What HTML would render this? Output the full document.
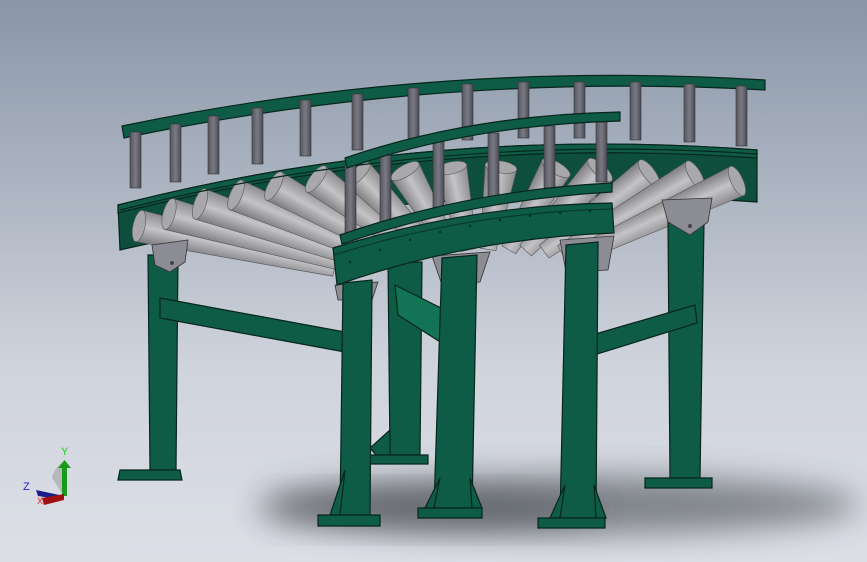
<!DOCTYPE html>
<html><head><style>
html,body{margin:0;padding:0;width:867px;height:562px;overflow:hidden}
body{background:linear-gradient(#8996a8 0%,#aeb6c3 35%,#cfd3dc 65%,#dcdfe6 100%)}
svg{position:absolute;left:0;top:0}
</style></head><body>
<svg width="867" height="562" viewBox="0 0 867 562">
<defs>
<filter id="b" x="-50%" y="-50%" width="200%" height="200%"><feGaussianBlur stdDeviation="16"/></filter>
<linearGradient id="v" x1="0" y1="0" x2="1" y2="0"><stop offset="0" stop-color="#55555f"/><stop offset="0.5" stop-color="#7a7a85"/><stop offset="1" stop-color="#4a4a55"/></linearGradient>
</defs>
<ellipse cx="560" cy="505" rx="300" ry="30" fill="#44484f" opacity="0.6" filter="url(#b)"/>
<ellipse cx="430" cy="510" rx="170" ry="18" fill="#3a3e45" opacity="0.45" filter="url(#b)"/>
<g stroke="#06251b" stroke-width="1.2" fill="#0f5c46">
<path d="M118 205 Q430 125 757 150 L757 202 Q430 178 120 250 Z" fill="#0d4f3c"/>
<path d="M118 205 Q430 125 757 150 L757 158 Q430 135 118 213 Z"/>
</g>
<g id="rollers"></g>
<g stroke="#06251b" stroke-width="1.2" fill="#0f5c46">
<path d="M122 126 Q440 60 765 80 L765 90 Q440 72 124 138 Z"/>
</g>
<g fill="url(#v)" stroke="#333" stroke-width="0.6">
<rect x="130" y="132" width="11" height="56"/><rect x="170" y="124" width="11" height="58"/>
<rect x="208" y="116" width="11" height="58"/><rect x="252" y="108" width="11" height="56"/>
<rect x="300" y="100" width="11" height="56"/><rect x="352" y="94" width="11" height="56"/>
<rect x="408" y="88" width="11" height="56"/><rect x="462" y="84" width="11" height="56"/>
<rect x="518" y="82" width="11" height="56"/><rect x="574" y="82" width="11" height="56"/>
<rect x="630" y="82" width="11" height="58"/><rect x="684" y="84" width="11" height="58"/>
<rect x="736" y="86" width="11" height="60"/>
</g>
<g stroke="#06251b" stroke-width="1.2" fill="#0f5c46">
<path d="M120 210 Q430 132 757 154" fill="none"/>
<path d="M148 255 L178 255 L176 470 L150 470 Z"/>
<path d="M120 470 L180 470 L182 480 L118 480 Z"/>
<path d="M160 298 L345 332 L345 352 L160 318 Z"/>
<path d="M388 262 L422 262 L420 455 L390 455 Z"/>
<path d="M376 455 L370 448 L390 430 L390 455 Z"/>
<path d="M365 455 L428 455 L428 464 L365 464 Z"/>
<path d="M395 285 L445 310 L445 345 L398 315 Z" fill="#137355"/>
<path d="M668 222 L704 222 L700 478 L670 478 Z"/>
<path d="M645 478 L712 478 L712 488 L645 488 Z"/>
<path d="M592 335 L695 305 L697 323 L594 355 Z"/>
</g>
<g fill="url(#v)" stroke="#333" stroke-width="0.6">
<rect x="345" y="165" width="11" height="72"/><rect x="380" y="155" width="11" height="68"/>
<rect x="433" y="142" width="11" height="66"/><rect x="488" y="133" width="11" height="64"/>
<rect x="544" y="126" width="11" height="62"/><rect x="596" y="122" width="11" height="60"/>
</g>
<g stroke="#06251b" stroke-width="1.2" fill="#0f5c46">
<path d="M345 158 Q470 115 620 112 L620 121 Q470 125 347 168 Z"/>
<path d="M340 235 Q470 190 612 183 L612 192 Q470 200 342 244 Z"/>
</g>
<g fill="#8c8c94" stroke="#333" stroke-width="0.8">
<path d="M152 245 L188 240 L185 262 L170 272 L155 265 Z"/>
<path d="M662 200 L712 198 L708 222 L690 235 L668 222 Z"/>
<path d="M432 256 L490 252 L480 282 L442 285 Z"/>
<path d="M560 240 L614 236 L608 270 L566 272 Z"/>
<path d="M335 285 L378 282 L372 300 L338 300 Z"/>
</g>
<g fill="#444"><circle cx="172" cy="263" r="2"/><circle cx="690" cy="226" r="2"/><circle cx="462" cy="268" r="1.5"/><circle cx="462" cy="278" r="1.5"/><circle cx="586" cy="254" r="1.5"/><circle cx="586" cy="265" r="1.5"/></g>
<g stroke="#06251b" stroke-width="1.2" fill="#0f5c46">
<path d="M343 283 L372 280 L370 515 L340 515 Z"/>
<path d="M340 515 L330 515 L345 470 Z"/>
<path d="M318 515 L380 515 L380 526 L318 526 Z"/>
<path d="M442 258 L477 255 L472 508 L434 508 Z"/>
<path d="M434 508 L425 508 L440 478 Z"/><path d="M472 508 L482 508 L470 478 Z"/>
<path d="M418 508 L482 508 L482 518 L418 518 Z"/>
<path d="M566 245 L598 242 L596 518 L560 518 Z"/>
<path d="M560 518 L550 518 L565 485 Z"/><path d="M596 518 L606 518 L594 485 Z"/>
<path d="M538 518 L605 518 L605 528 L538 528 Z"/>
<path d="M333 248 Q470 205 612 203 L614 233 Q470 238 337 285 Z"/>
<path d="M334 255 Q470 212 612 209" fill="none" stroke="#0a3a2c"/>
</g>
<g fill="#062a1f">
<circle cx="350" cy="262" r="1.2"/><circle cx="380" cy="250" r="1.2"/><circle cx="410" cy="240" r="1.2"/><circle cx="440" cy="232" r="1.2"/><circle cx="470" cy="226" r="1.2"/><circle cx="500" cy="220" r="1.2"/><circle cx="530" cy="216" r="1.2"/><circle cx="560" cy="213" r="1.2"/><circle cx="590" cy="211" r="1.2"/>
</g>
<path d="M52 478 A22 22 0 0 1 64 462 L64 496 Z" fill="#aaa" opacity="0.7"/>
<rect x="62" y="468" width="5" height="28" fill="#1a9a1a"/>
<path d="M58 468 L64.5 460 L71 468 Z" fill="#1a9a1a"/>
<path d="M36 490 L64 496 L64 500 L38 496 Z" fill="#1c1c8a"/>
<path d="M42 498 L64 494 L64 500 L44 505 Z" fill="#a01010"/>
<text x="61" y="455" font-family="Liberation Sans,sans-serif" font-size="11" fill="#22cc22">Y</text>
<text x="23" y="490" font-family="Liberation Sans,sans-serif" font-size="11" fill="#2222cc">Z</text>
<text x="37" y="504" font-family="Liberation Sans,sans-serif" font-size="9" fill="#ee2222">X</text>
</svg>
<script>
(function(){
var g=document.getElementById('rollers'),ns='http://www.w3.org/2000/svg';
var pts=[[139,226],[169,214],[200,204],[236,195],[274,186],[316,179],[358,174],[405,171],[451,168],[501,167],[556,168],[600,170],[649,173],[695,175],[737,181]];
var C=[480,300],R1=16,R2=8;
for(var i=0;i<pts.length;i++){
 var p=pts[i],dx=C[0]-p[0],dy=C[1]-p[1],L=Math.sqrt(dx*dx+dy*dy),ux=dx/L,uy=dy/L,nx=-uy,ny=ux,f=Math.min(0.62,200/L);
 var e=[p[0]+dx*f,p[1]+dy*f];
 var gid='rg'+i,lg=document.createElementNS(ns,'linearGradient');
 lg.setAttribute('id',gid);lg.setAttribute('gradientUnits','userSpaceOnUse');
 lg.setAttribute('x1',p[0]-nx*R1);lg.setAttribute('y1',p[1]-ny*R1);lg.setAttribute('x2',p[0]+nx*R1);lg.setAttribute('y2',p[1]+ny*R1);
 [['0','#8a8a8e'],['0.5','#c4c4c6'],['1','#7c7c80']].forEach(function(s){var st=document.createElementNS(ns,'stop');st.setAttribute('offset',s[0]);st.setAttribute('stop-color',s[1]);lg.appendChild(st);});
 g.appendChild(lg);
 var a=[p[0]+nx*R1,p[1]+ny*R1],b=[e[0]+nx*R2,e[1]+ny*R2],c=[e[0]-nx*R2,e[1]-ny*R2],d=[p[0]-nx*R1,p[1]-ny*R1];
 var path=document.createElementNS(ns,'path');
 path.setAttribute('d','M'+a+' L'+b+' L'+c+' L'+d+' Z');
 path.setAttribute('fill','url(#'+gid+')');path.setAttribute('stroke','#555');path.setAttribute('stroke-width','0.6');
 g.appendChild(path);
 var el=document.createElementNS(ns,'ellipse');
 var ang=Math.atan2(uy,ux)*180/Math.PI;
 el.setAttribute('cx',p[0]);el.setAttribute('cy',p[1]);el.setAttribute('rx',6);el.setAttribute('ry',R1);
 el.setAttribute('transform','rotate('+ang+' '+p[0]+' '+p[1]+')');
 el.setAttribute('fill','#a8a8ab');el.setAttribute('stroke','#555');el.setAttribute('stroke-width','0.6');
 g.appendChild(el);
}
})();
</script>
</body></html>
